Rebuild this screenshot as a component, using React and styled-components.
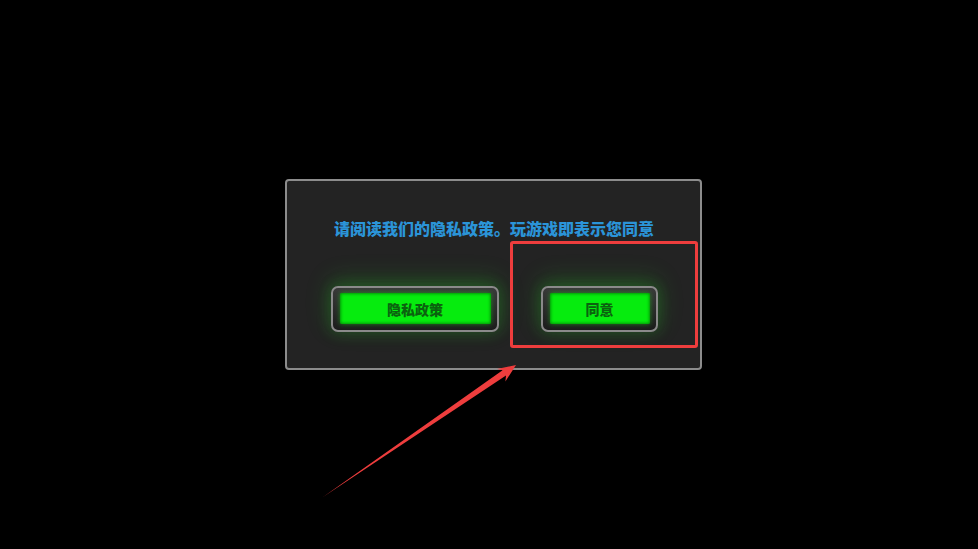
import React from "react";
import styled, { createGlobalStyle } from "styled-components";

const GlobalStyle = createGlobalStyle`
    html, body {
        margin: 0;
        padding: 0;
        background: #000;
        font-family: "Noto Sans CJK SC", "Liberation Sans", sans-serif;
    }
`;

const App = () => {
    return (
        <StPage>
            <GlobalStyle />
            <StDialog>
                <StTitle>请阅读我们的隐私政策。玩游戏即表示您同意</StTitle>
                <StButtonRow>
                    <StBezel $width={168}>
                        <StGreen>隐私政策</StGreen>
                    </StBezel>
                    <StBezel $width={117}>
                        <StGreen>同意</StGreen>
                    </StBezel>
                </StButtonRow>
                <StMarkBox />
            </StDialog>
            <StArrow viewBox="0 0 978 549">
                <polygon points="323,497 502.6,370.2 497.0,369.0 516,365 505.4,381.4 506.0,375.4" fill="#ee3d3d" />
            </StArrow>
        </StPage>
    );
};

export default App;

const StPage = styled.div`
    position: relative;
    width: 100vw;
    height: 100vh;
    display: flex;
    align-items: center;
    justify-content: center;
    padding-left: 8px;
    box-sizing: border-box;
    overflow: hidden;
`;

const StDialog = styled.div`
    position: relative;
    width: 417px;
    height: 191px;
    box-sizing: border-box;
    border: 2px solid #8c8c8c;
    border-radius: 4px;
    background: #232323;
    padding-top: 37px;
`;

const StTitle = styled.div`
    text-align: center;
    color: #2b94d8;
    font-size: 16px;
    font-weight: 900;
    line-height: 20px;
    padding-left: 2px;
`;

const StButtonRow = styled.div`
    display: flex;
    justify-content: space-between;
    padding: 0 42px 0 44px;
    margin-top: 48px;
`;

const StBezel = styled.div`
    width: ${(p) => p.$width}px;
    height: 46px;
    box-sizing: border-box;
    padding: 5px 6px 6px 7px;
    border: 2px solid #8a8a8a;
    border-radius: 7px;
    background: linear-gradient(#3a3a3a, #1c1c1c);
    box-shadow: 0 -6px 24px 2px rgba(40, 200, 40, 0.2), 0 0 14px 2px rgba(40, 200, 40, 0.18);
`;

const StGreen = styled.div`
    height: 100%;
    display: flex;
    align-items: center;
    justify-content: center;
    background: #06ec0e;
    border-radius: 2px;
    box-shadow: inset 0 0 3px 1px rgba(0, 90, 0, 0.6), 0 0 5px rgba(20, 230, 20, 0.5);
    color: #0b620f;
    font-size: 14px;
    font-weight: 900;
`;

const StMarkBox = styled.div`
    position: absolute;
    left: 223px;
    top: 60px;
    width: 188px;
    height: 107px;
    box-sizing: border-box;
    border: 3px solid #ee3d3d;
    border-radius: 3px;
`;

const StArrow = styled.svg`
    position: absolute;
    left: 0;
    top: 0;
    width: 978px;
    height: 549px;
    pointer-events: none;
`;
